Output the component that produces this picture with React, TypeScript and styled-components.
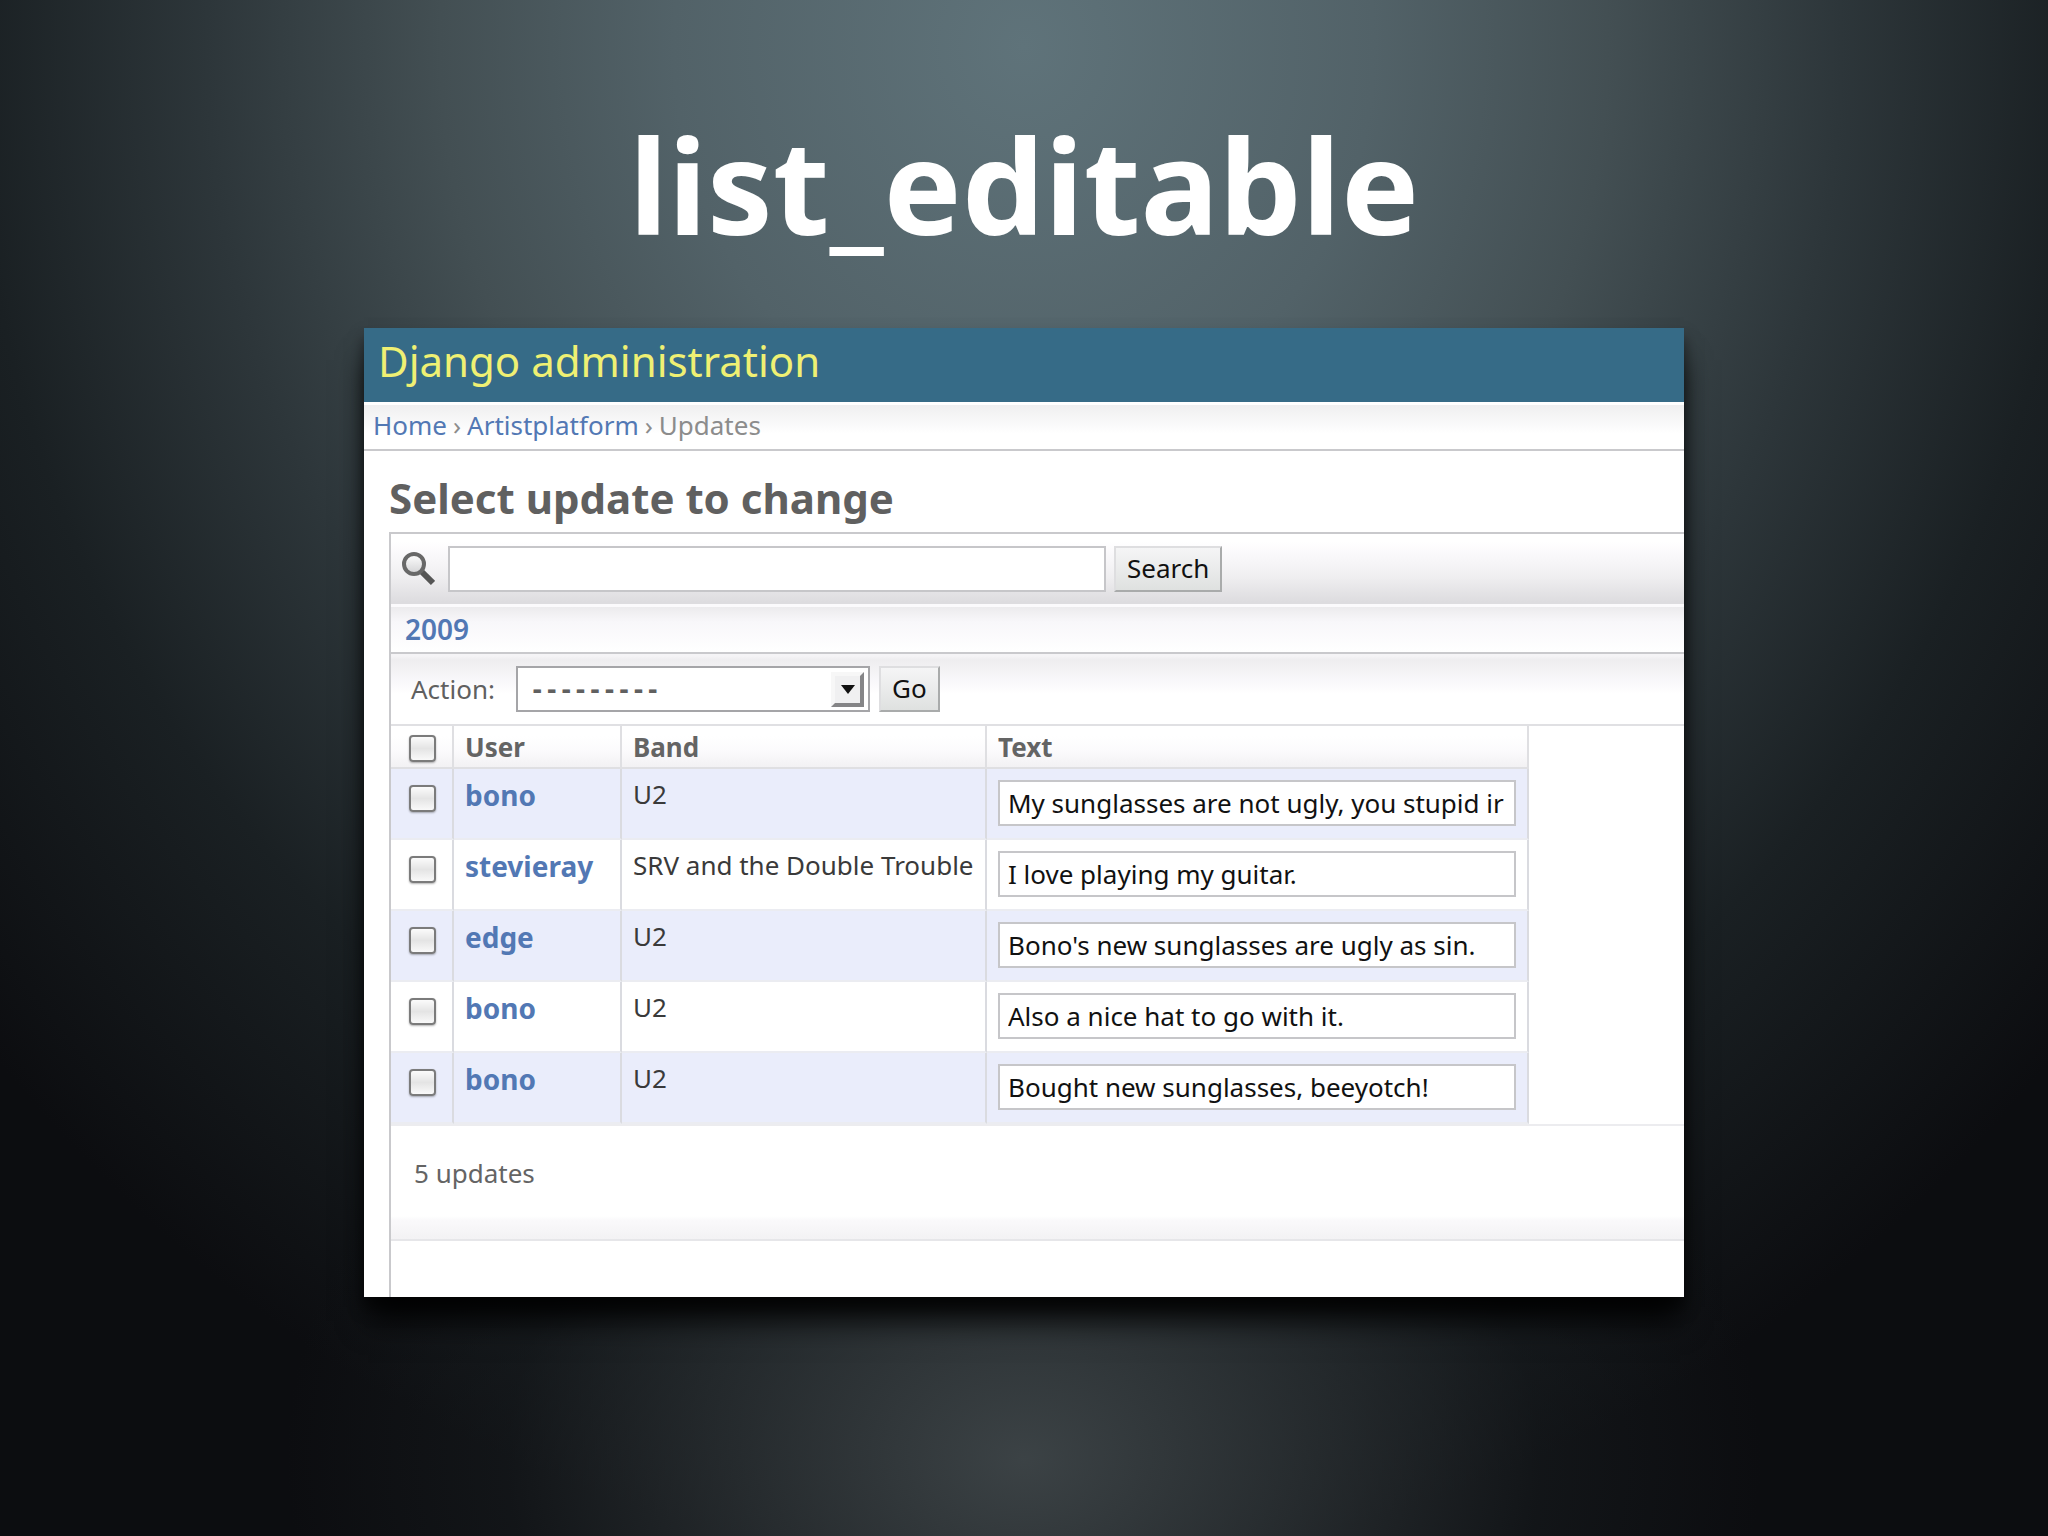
import React, { useState } from "react";
import styled, { createGlobalStyle } from "styled-components";

const GlobalStyle = createGlobalStyle`
  *, *::before, *::after { box-sizing: border-box; }
  body {
    margin: 0;
    background: #0c0d10;
    font-family: "Noto Sans", "Open Sans", sans-serif;
  }
  a { text-decoration: none; }
`;

const Slide = styled.main`
  min-height: 100vh;
  display: flex;
  flex-direction: column;
  align-items: center;
  padding: 96px 24px;
  background:
    radial-gradient(ellipse 36% 36% at 50% 95%, rgba(62, 69, 72, 0.95), rgba(46, 52, 55, 0.8) 35%, rgba(26, 31, 34, 0.45) 70%, rgba(12, 13, 16, 0)),
    radial-gradient(ellipse 57% 84% at 50% 3%, #5f737a, #526268 30%, #434f53 50%, #2d363a 70%, #1a2023 90%, #0c0d10 118%);
`;

const SlideTitle = styled.h1`
  margin: 0 0 56px;
  color: #fff;
  font-size: 131px;
  font-weight: 700;
  line-height: 176px;
  text-align: center;
`;

const Window = styled.section`
  width: 100%;
  max-width: 1320px;
  background: #fff;
  box-shadow: 0 28px 28px -4px rgba(0, 0, 0, 0.85), 0 10px 14px rgba(0, 0, 0, 0.5);
  overflow: hidden;
`;

const SiteHeader = styled.header`
  height: 74px;
  padding: 5px 14px;
  background: #366b87;
  color: #eff073;
  font-size: 42px;
  line-height: 56px;
`;

const Breadcrumbs = styled.nav`
  height: 49px;
  display: flex;
  align-items: center;
  gap: 6px;
  padding: 0 9px 2px;
  border-bottom: 2px solid #c9c9cc;
  background: linear-gradient(#fff 3px, #efeff0 3px, #fff 32px);
  color: #8c8c8c;
  font-size: 26px;
  line-height: 34px;
  a { color: #5278b4; }
`;

const Content = styled.div`
  padding: 23px 0 0 25px;
`;

const PageTitle = styled.h2`
  margin: 0 0 10px;
  color: #606060;
  font-size: 42px;
  font-weight: 700;
  line-height: 48px;
`;

const Changelist = styled.div`
  border-top: 2px solid #c9c9cc;
  border-left: 2px solid #c9c9cc;
  padding-bottom: 56px;
`;

const SearchBar = styled.form`
  height: 70px;
  display: flex;
  align-items: center;
  gap: 8px;
  padding: 0 10px;
  background: linear-gradient(#fff 8px, #faf9fb 20px, #f0eff1 42px, #dddcdf 68px);
`;

const SearchLabel = styled.label`
  width: 39px;
  display: flex;
`;

const fieldStyle = `
  border: 2px solid #c6c6c9;
  border-radius: 0;
  background: #fff;
  color: #111;
  font-family: inherit;
  font-size: 26px;
  outline: 0;
`;

const SearchInput = styled.input`
  ${fieldStyle}
  width: 658px;
  height: 46px;
  padding: 0 8px;
`;

const Button = styled.button`
  height: 46px;
  padding: 0 11px 2px;
  border: 2px solid;
  border-color: #dedee0 #a9abab #a9abab #dedee0;
  border-radius: 0;
  background: linear-gradient(#f5f5f6, #dfe1e0);
  color: #111;
  font-family: inherit;
  font-size: 26px;
  line-height: 34px;
`;

const DateBar = styled.div`
  height: 50px;
  padding: 8px 14px;
  border-bottom: 2px solid #c9c9cc;
  background: linear-gradient(#fbfafc 3px, #ecebed 3px, #f8f7fa 18px, #fff 48px);
  font-size: 28px;
  font-weight: 600;
  line-height: 34px;
  a { color: #5278b4; }
`;

const Actions = styled.form`
  height: 72px;
  display: flex;
  align-items: center;
  gap: 9px;
  padding: 0 20px;
  border-bottom: 2px solid #e0e0e3;
  background: linear-gradient(#f5f4f6 2px, #eeedef 6px, #f8f7fa 26px, #fff 40px);
  color: #606060;
  font-size: 26px;
  line-height: 34px;
`;

const ActionLabel = styled.label`
  width: 96px;
`;

const SelectWrap = styled.div`
  position: relative;
  width: 354px;
`;

const Select = styled.select`
  ${fieldStyle}
  appearance: none;
  display: block;
  width: 100%;
  height: 46px;
  padding: 2px 48px 0 12px;
  border-color: #a5a5a8;
  color: #606060;
  font-family: "DejaVu Sans Mono", monospace;
  font-size: 24px;
  font-weight: 700;
`;

const SelectArrow = styled.span`
  position: absolute;
  top: 6px;
  right: 6px;
  width: 33px;
  height: 35px;
  display: flex;
  align-items: center;
  justify-content: center;
  border: 4px solid;
  border-color: #f7f7f7 #858587 #858587 #f7f7f7;
  background: #f0f0f1;
  pointer-events: none;
`;

const Results = styled.div`
  border-bottom: 2px solid #ececef;
`;

const Table = styled.table`
  border-collapse: separate;
  border-spacing: 0;
  table-layout: fixed;
  width: 1138px;
  max-width: 100%;
  font-size: 26px;
  line-height: 32px;
`;

const Col = styled.col<{ $width: number }>`
  width: ${(p) => p.$width}px;
`;

const Th = styled.th`
  height: 43px;
  padding: 0 11px;
  border-right: 2px solid #dfdfe2;
  border-bottom: 2px solid #dfdfe2;
  background: linear-gradient(#fff 10px, #fbfafc 26px, #f2f1f3);
  color: #646464;
  font-size: 26px;
  font-weight: 700;
  text-align: left;
  white-space: nowrap;
`;

const Row = styled.tr`
  background: #fff;
  &:nth-child(odd) { background: #eaedfb; }
`;

const Td = styled.td`
  height: 71px;
  padding: 9px 11px 0;
  border-right: 2px solid #dadbe0;
  border-bottom: 2px solid #ebecf1;
  color: #3a3a3a;
  vertical-align: top;
  white-space: nowrap;
`;

const InputTd = styled(Td)`
  padding: 11px 11px 0;
`;

const CheckTd = styled(Td)`
  padding: 16px 18px 0;
`;

const CheckTh = styled(Th)`
  padding: 4px 18px 0;
`;

const Checkbox = styled.input`
  appearance: none;
  display: block;
  width: 27px;
  height: 27px;
  margin: 0;
  border: 2px solid #7b7b7b;
  border-radius: 4px;
  background: linear-gradient(#fbfbfb, #e4e4e4 50%, #f9f9f9);
  box-shadow: 0 1px 2px rgba(0, 0, 0, 0.3);
  &:checked { background: #5278b4; }
`;

const UserLink = styled.a`
  color: #5278b4;
  display: block;
  font-size: 28px;
  font-weight: 700;
  line-height: 34px;
`;

const TextInput = styled.input`
  ${fieldStyle}
  display: block;
  width: 100%;
  height: 46px;
  padding: 0 8px;
`;

const Paginator = styled.p`
  height: 115px;
  margin: 0;
  padding: 30px 23px;
  border-bottom: 2px solid #e6e6e9;
  background: linear-gradient(#fff 90px, #faf9fb 94px, #f3f2f4);
  color: #646464;
  font-size: 26px;
  line-height: 34px;
`;

const updates = [
  { user: "bono", band: "U2", text: "My sunglasses are not ugly, you stupid ir" },
  { user: "stevieray", band: "SRV and the Double Trouble", text: "I love playing my guitar." },
  { user: "edge", band: "U2", text: "Bono's new sunglasses are ugly as sin." },
  { user: "bono", band: "U2", text: "Also a nice hat to go with it." },
  { user: "bono", band: "U2", text: "Bought new sunglasses, beeyotch!" },
];

function SearchIcon() {
  return (
    <svg width="34" height="34" viewBox="0 0 34 34" aria-hidden="true">
      <defs>
        <linearGradient id="lens" x1="0" y1="0" x2="0" y2="1">
          <stop offset="0" stopColor="#ffffff" />
          <stop offset="1" stopColor="#d2d2d4" />
        </linearGradient>
      </defs>
      <path d="M21 20 L32 31" stroke="#555" strokeWidth="6" />
      <circle cx="13" cy="12" r="10" fill="url(#lens)" stroke="#686868" strokeWidth="4" />
    </svg>
  );
}

export default function App() {
  const [texts, setTexts] = useState(updates.map((u) => u.text));
  const [picked, setPicked] = useState(updates.map(() => false));

  return (
    <>
      <GlobalStyle />
      <Slide>
        <SlideTitle>list_editable</SlideTitle>
        <Window>
          <SiteHeader>Django administration</SiteHeader>
          <Breadcrumbs aria-label="Breadcrumb">
            <a href="#home">Home</a>
            <span>›</span>
            <a href="#artistplatform">Artistplatform</a>
            <span>›</span>
            <span>Updates</span>
          </Breadcrumbs>
          <Content>
            <PageTitle>Select update to change</PageTitle>
            <Changelist>
              <SearchBar onSubmit={(e) => e.preventDefault()}>
                <SearchLabel htmlFor="searchbar">
                  <SearchIcon />
                </SearchLabel>
                <SearchInput id="searchbar" type="text" />
                <Button type="submit">Search</Button>
              </SearchBar>
              <DateBar>
                <a href="#2009">2009</a>
              </DateBar>
              <Actions onSubmit={(e) => e.preventDefault()}>
                <ActionLabel htmlFor="action">Action:</ActionLabel>
                <SelectWrap>
                  <Select id="action">
                    <option>---------</option>
                  </Select>
                  <SelectArrow>
                    <svg width="14" height="10" viewBox="0 0 14 10" aria-hidden="true">
                      <path d="M0 0H14L7 9Z" fill="#111" />
                    </svg>
                  </SelectArrow>
                </SelectWrap>
                <Button type="submit">Go</Button>
              </Actions>
              <Results>
                <Table>
                  <colgroup>
                    <Col $width={63} />
                    <Col $width={168} />
                    <Col $width={365} />
                    <Col $width={542} />
                  </colgroup>
                  <thead>
                    <tr>
                      <CheckTh>
                        <Checkbox
                          type="checkbox"
                          aria-label="Select all"
                          checked={picked.every(Boolean)}
                          onChange={(e) => setPicked(picked.map(() => e.target.checked))}
                        />
                      </CheckTh>
                      <Th>User</Th>
                      <Th>Band</Th>
                      <Th>Text</Th>
                    </tr>
                  </thead>
                  <tbody>
                    {updates.map((u, i) => (
                      <Row key={i}>
                        <CheckTd>
                          <Checkbox
                            type="checkbox"
                            aria-label={`Select ${u.user}`}
                            checked={picked[i]}
                            onChange={(e) => setPicked(picked.map((p, n) => (n === i ? e.target.checked : p)))}
                          />
                        </CheckTd>
                        <Td>
                          <UserLink href={`#update-${i + 1}`}>{u.user}</UserLink>
                        </Td>
                        <Td>{u.band}</Td>
                        <InputTd>
                          <TextInput
                            type="text"
                            aria-label="Text"
                            value={texts[i]}
                            onChange={(e) => setTexts(texts.map((t, n) => (n === i ? e.target.value : t)))}
                          />
                        </InputTd>
                      </Row>
                    ))}
                  </tbody>
                </Table>
              </Results>
              <Paginator>5 updates</Paginator>
            </Changelist>
          </Content>
        </Window>
      </Slide>
    </>
  );
}
